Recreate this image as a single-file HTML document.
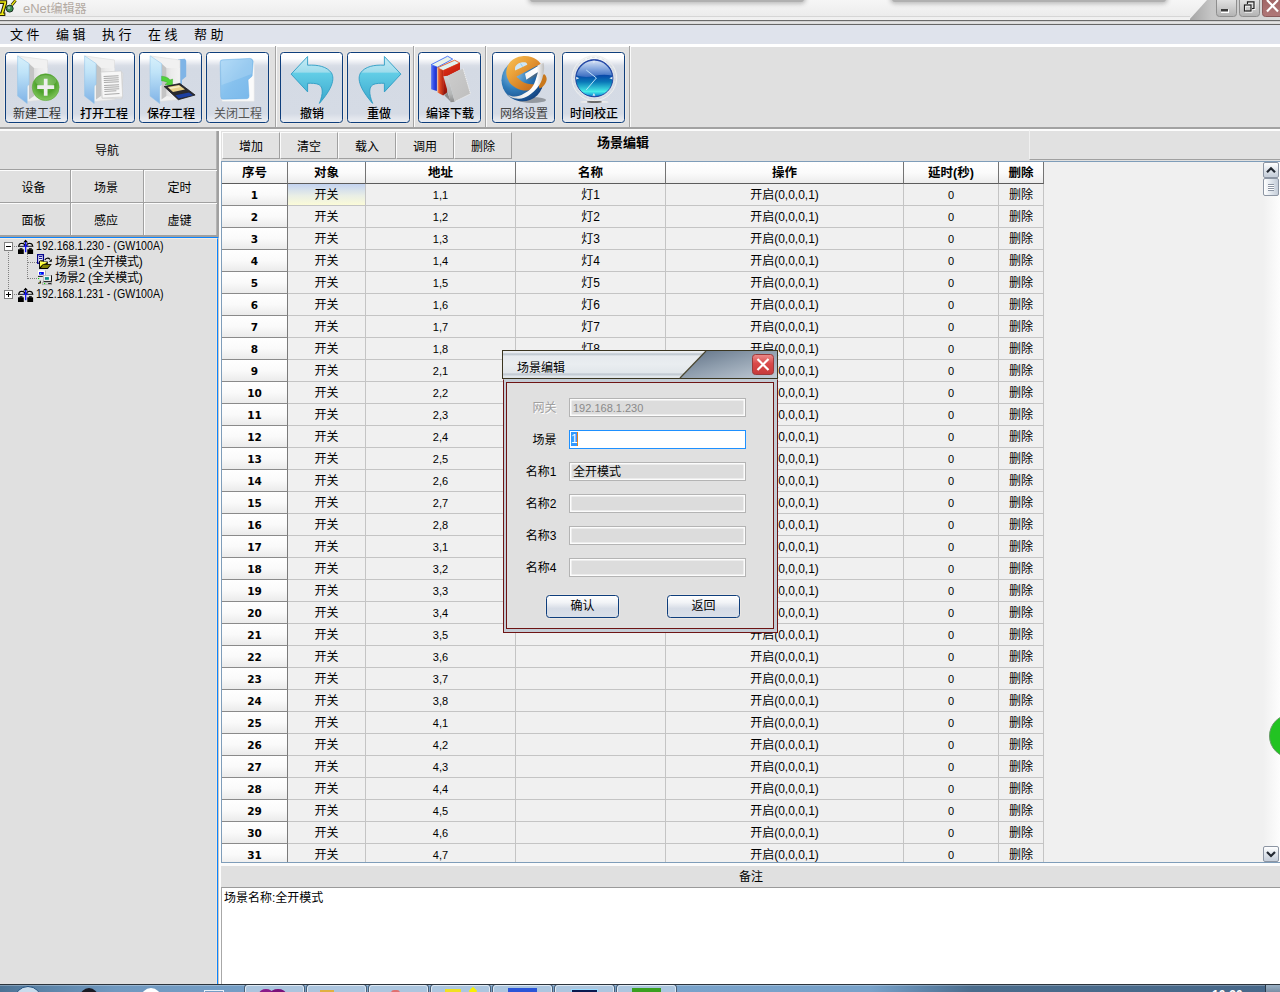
<!DOCTYPE html><html lang="zh-CN"><head><meta charset="utf-8"><title>eNet编辑器</title><style>
*{box-sizing:border-box;margin:0;padding:0}
html,body{width:1280px;height:992px;overflow:hidden;background:#e0e0e0;font-family:"Liberation Sans","Noto Sans CJK SC",sans-serif;font-size:12px;color:#000}
.abs{position:absolute}
#title{left:0;top:0;width:1280px;height:20px;overflow:hidden;background:linear-gradient(#f6f6f6,#f0f0f0 50%,#e9e9e9)}
#title .t{left:23px;top:0;height:18px;line-height:17px;font-size:13px;color:#b3aaa2;white-space:nowrap}
#menubar{left:0;top:25px;width:1280px;height:19px;background:#dfe3ec}
#menubar span{position:absolute;top:0;height:19px;line-height:19px;font-size:13px;white-space:nowrap;word-spacing:0px}
#toolbar{left:0;top:47px;width:1280px;height:80px;background:#e0e0e0}
.tb{position:absolute;top:5px;width:63px;height:71px;border:1px solid #0e3e7c;border-radius:3.5px;box-shadow:0 0 0 1px rgba(244,238,232,0.55);background:linear-gradient(#ffffff 0,#fcfdfe 8%,#eceef3 13%,#d9dee7 18%,#d4dae4 23%,#d5dbe5 88%,#e1e5ec 94%,#e9ecf2 100%)}
.tb .l{position:absolute;left:1px;right:0;bottom:0.5px;height:16px;line-height:16px;text-align:center;font-size:12px;white-space:nowrap}
.tb svg{position:absolute;left:0;top:0}
.sep{position:absolute;top:-1px;width:2px;height:81px;border-left:1px solid #a4a4a4;border-right:1px solid #fafafa}
.raised{position:absolute;background:#e2e2e2;border-top:1px solid #fafafa;border-left:1px solid #fafafa;border-right:2px solid #a8a8a8;border-bottom:2px solid #a8a8a8;text-align:center;font-size:13px;white-space:nowrap}
.lt{position:absolute;text-align:center;font-size:12px;white-space:nowrap;transform:translate(-1px,1px)}
.tab{position:absolute;top:132px;width:58px;height:27px;background:#e2e2e2;border-top:1px solid #fcfcfc;border-left:1px solid #fcfcfc;border-right:1px solid #a0a0a0;border-bottom:1px solid #a0a0a0;text-align:center;line-height:28px;font-size:12px}
#grid{left:221px;top:161px;width:1059px;height:702px;overflow:hidden;background:#f0f0f0;border-left:1px solid #7f9db9;border-top:1px solid #7f9db9;border-bottom:1px solid #7f9db9}
.hc{position:absolute;top:0;height:22px;background:linear-gradient(#ffffff,#fbfbfb 50%,#ececec);border-right:1px solid #747474;border-bottom:1px solid #5c5c5c;text-align:center;font-weight:bold;line-height:22px;font-size:12.5px}
.rh{position:absolute;left:0;width:66px;height:22px;background:linear-gradient(#ffffff,#fafafa 50%,#ebebeb);border-right:1px solid #7a7a7a;border-bottom:1px solid #8a8a8a;text-align:center;font-weight:bold;line-height:22px;font-size:10.5px;font-family:"DejaVu Sans","Liberation Sans",sans-serif}
.c{position:absolute;height:22px;border-right:1px solid #c4c4c4;border-bottom:1px solid #c4c4c4;text-align:center;line-height:23px;font-size:12px;white-space:nowrap}
.c.n{font-size:11px;line-height:22px}

#tree{position:absolute;left:0;top:238px;width:217px;height:746px;font-size:12px}
#tree .tx{position:absolute;height:16px;line-height:16px;white-space:nowrap;font-size:12px}
.dot-h{position:absolute;height:1px;background-image:linear-gradient(90deg,#808080 50%,transparent 50%);background-size:2px 1px}
.dot-v{position:absolute;width:1px;background-image:linear-gradient(#808080 50%,transparent 50%);background-size:1px 2px}
.xb{position:absolute;width:9px;height:9px;border:1px solid #808080;background:#fff}
.xb i{position:absolute;left:1px;top:3px;width:5px;height:1px;background:#000}
.xb b{position:absolute;left:3px;top:1px;width:1px;height:5px;background:#000}
#sb{position:absolute;left:1041px;top:0;width:17px;height:700px;background:linear-gradient(90deg,#f0f0f0,#f4f4f4 30%,#fdfdfd)}
.sbtn{position:absolute;left:0;width:16px;border:1px solid #8c95a3;border-radius:2px;background:linear-gradient(#ffffff,#e9edf2 35%,#c9d1dc 90%)}
#dlg{position:absolute;left:502px;top:350px;width:276px;height:283px}
#dlg .lab{position:absolute;left:18.5px;width:36px;text-align:right;height:18px;line-height:18px;font-size:12px;white-space:nowrap}
#dlg .fld{position:absolute;left:67px;width:177px;height:19px;border:1px solid #b4b4b4;background:#dcdcdc;box-shadow:inset 0 0 0 1.5px #fcfcfc;line-height:19px;font-size:12px;padding-left:3px;white-space:nowrap}
.pbtn{position:absolute;height:23px;width:73px;border:1px solid #0e3e7c;border-radius:3.5px;box-shadow:0 0 0 1px rgba(244,238,232,0.5);background:linear-gradient(#ffffff,#f2f4f7 30%,#d6dce6 60%,#d9dfe8);text-align:center;line-height:21px;font-size:12px}
</style></head><body>
<svg width="0" height="0" style="position:absolute"><defs>
<linearGradient id="gFlap" x1="0" y1="0" x2="0" y2="1"><stop offset="0" stop-color="#d9f1fb"/><stop offset="0.35" stop-color="#bfe3f8"/><stop offset="1" stop-color="#7fb2e6"/></linearGradient>
<linearGradient id="gBack" x1="0" y1="0" x2="1" y2="0"><stop offset="0" stop-color="#cfcfcf"/><stop offset="0.35" stop-color="#e6e6e6"/><stop offset="1" stop-color="#f4f4f4"/></linearGradient>
<radialGradient id="gGreen" cx="0.5" cy="0.35" r="0.7"><stop offset="0" stop-color="#6fbf4a"/><stop offset="0.5" stop-color="#4da22a"/><stop offset="1" stop-color="#8fd06a"/></radialGradient>
<linearGradient id="gBlueF" x1="0" y1="0" x2="1" y2="1"><stop offset="0" stop-color="#a6d5f5"/><stop offset="0.5" stop-color="#86c1ee"/><stop offset="1" stop-color="#78b7ea"/></linearGradient>
<linearGradient id="gArrow" x1="0" y1="0" x2="0" y2="1"><stop offset="0" stop-color="#c9ecf5"/><stop offset="0.33" stop-color="#9fdcec"/><stop offset="0.36" stop-color="#62cde6"/><stop offset="0.7" stop-color="#4db9d8"/><stop offset="1" stop-color="#3fa6c9"/></linearGradient>
<linearGradient id="gBlueBk" x1="0" y1="0" x2="1" y2="0"><stop offset="0" stop-color="#5c7cf4"/><stop offset="0.5" stop-color="#2f48e6"/><stop offset="1" stop-color="#1b2cc4"/></linearGradient><linearGradient id="gRedF" x1="0" y1="0" x2="0.3" y2="1"><stop offset="0" stop-color="#e2381c"/><stop offset="0.4" stop-color="#cc2410"/><stop offset="1" stop-color="#861008"/></linearGradient><linearGradient id="gGraySp" x1="0" y1="0" x2="0" y2="1"><stop offset="0" stop-color="#d2d6d6"/><stop offset="0.7" stop-color="#b4b6b6"/><stop offset="1" stop-color="#8a8a8a"/></linearGradient>
<linearGradient id="gRedBk" x1="0" y1="0" x2="1" y2="0"><stop offset="0" stop-color="#f0905a"/><stop offset="0.4" stop-color="#e04a26"/><stop offset="1" stop-color="#b42812"/></linearGradient>
<linearGradient id="gGrayBk" x1="0" y1="0" x2="1" y2="1"><stop offset="0" stop-color="#cdcdcd"/><stop offset="1" stop-color="#bebebe"/></linearGradient>
<radialGradient id="gGlobe" cx="0.3" cy="0.35" r="0.8"><stop offset="0" stop-color="#8cc0e4"/><stop offset="0.45" stop-color="#2f7cba"/><stop offset="1" stop-color="#0f3a78"/></radialGradient>
<linearGradient id="gOrange" x1="0" y1="0" x2="1" y2="1"><stop offset="0" stop-color="#f8c45a"/><stop offset="0.35" stop-color="#eba23a"/><stop offset="0.7" stop-color="#d27c24"/><stop offset="1" stop-color="#b8621a"/></linearGradient>
<linearGradient id="gSilver" x1="0" y1="0" x2="1" y2="0"><stop offset="0" stop-color="#c8c8c8"/><stop offset="0.45" stop-color="#f4f4f4"/><stop offset="0.8" stop-color="#ffffff"/><stop offset="1" stop-color="#bcbcbc"/></linearGradient>
<linearGradient id="gClock" x1="0" y1="0" x2="0" y2="1"><stop offset="0" stop-color="#2a50b0"/><stop offset="0.42" stop-color="#0848a8"/><stop offset="0.6" stop-color="#0a78b8"/><stop offset="0.86" stop-color="#46ece8"/><stop offset="0.95" stop-color="#1aa4dc"/><stop offset="1" stop-color="#0a4ab0"/></linearGradient><linearGradient id="gGloss" x1="0" y1="0" x2="0" y2="1"><stop offset="0" stop-color="#d4e0f4"/><stop offset="0.55" stop-color="#7ea2dc"/><stop offset="1" stop-color="#3a6cc0"/></linearGradient>
<linearGradient id="gRing" x1="0" y1="0" x2="0" y2="1"><stop offset="0" stop-color="#ffffff"/><stop offset="0.5" stop-color="#e4e8ec"/><stop offset="1" stop-color="#f8f8f8"/></linearGradient>
</defs></svg>
<div id="title" class="abs"><span class="abs t">eNet<span style="font-size:12px">编辑器</span></span>
<div class="abs" style="left:530px;top:-5px;width:274px;height:7px;background:#b0b0b0;border-radius:3px;box-shadow:0 0 4px 2px #bcbcbc"></div>
<div class="abs" style="left:892px;top:-5px;width:274px;height:7px;background:#b0b0b0;border-radius:3px;box-shadow:0 0 4px 2px #bcbcbc"></div>
<svg class="abs" style="left:0;top:0" width="18" height="18" viewBox="0 0 18 18"><path d="M-1 0.700 H6.600 V3.300 L3.700 13 H4.800 V15.600 H-1 V13 H0.900 L3.700 3.400 H-1 Z" fill="#f2ec12" stroke="#2a2600" stroke-width="1.100"/><circle cx="9.700" cy="8.600" r="3.500" fill="#3c8c50" stroke="#1c3424" stroke-width="1"/><circle cx="9" cy="7.800" r="1.400" fill="#9abcb0"/><path d="M11.800 5 L15.600 0.300" stroke="#2a2600" stroke-width="2.800"/><path d="M11.800 5 L15.600 0.300" stroke="#f2ec12" stroke-width="1.300"/></svg>
<svg class="abs" style="left:1180px;top:0" width="100" height="20" viewBox="0 0 100 20"><defs><linearGradient id="sl" x1="0" y1="0" x2="1" y2="0"><stop offset="0" stop-color="#a4a4a4"/><stop offset="0.25" stop-color="#c6c6c6"/><stop offset="1" stop-color="#dadada"/></linearGradient><linearGradient id="wb" x1="0" y1="0" x2="0" y2="1"><stop offset="0" stop-color="#e6e6e6"/><stop offset="1" stop-color="#b2b2b2"/></linearGradient><linearGradient id="wc" x1="0" y1="0" x2="0" y2="1"><stop offset="0" stop-color="#a06464"/><stop offset="1" stop-color="#b07878"/></linearGradient></defs><path d="M27 0 L100 0 L100 20 L9 20 Z" fill="url(#sl)"/><path d="M36.500 -2 H56.500 V13.500 Q56.500 16.500 53.500 16.500 H39.500 Q36.500 16.500 36.500 13.500 Z" fill="url(#wb)" stroke="#8e8e8e"/><path d="M59.500 -2 H79.500 V13.500 Q79.500 16.500 76.500 16.500 H62.500 Q59.500 16.500 59.500 13.500 Z" fill="url(#wb)" stroke="#8e8e8e"/><path d="M82.500 -2 H102 V16.500 H85.500 Q82.500 16.500 82.500 13.500 Z" fill="url(#wc)" stroke="#8a5a5a"/><rect x="41" y="9.500" width="8" height="3.500" fill="#fff"/><rect x="41" y="9" width="7" height="2.500" fill="#3c3c3c"/><path d="M67.500 3.500 V2 H74 V8.500 H72.500" fill="none" stroke="#fff" stroke-width="1.2" transform="translate(0.8,0.8)"/><rect x="64.500" y="5.200" width="6.500" height="6" fill="none" stroke="#fff" stroke-width="1.2" transform="translate(0.8,0.8)"/><path d="M67.500 4 V1.800 H74 V8.500 H72" fill="none" stroke="#1e1e1e" stroke-width="1.2"/><rect x="64.500" y="5" width="6.500" height="6" fill="none" stroke="#1e1e1e" stroke-width="1.2"/><path d="M87 0 L98 11.500 M98 0 L87 11.500" stroke="#fff" stroke-width="2.2"/></svg>
</div>
<div class="abs" style="left:0;top:16px;width:1190px;height:4px;background:linear-gradient(#d6d6d6,#d6d6d6 25%,#f0f0f0 26%,#f1f1f1)"></div>
<div class="abs" style="left:0;top:20px;width:1280px;height:1px;background:#6a6a6a"></div>
<div class="abs" style="left:0;top:21px;width:1280px;height:3px;background:linear-gradient(#c8c8c8,#e4e4e4 50%,#d8d8d8)"></div>
<div class="abs" style="left:0;top:24px;width:1280px;height:1px;background:#666"></div>
<div id="menubar" class="abs">
<span style="left:10px">文 件</span>
<span style="left:56px">编 辑</span>
<span style="left:102px">执 行</span>
<span style="left:148px">在 线</span>
<span style="left:194px">帮 助</span>
</div>
<div class="abs" style="left:0;top:44px;width:1280px;height:3px;background:#fff"></div>
<div id="toolbar" class="abs">
<div class="tb" style="left:5px"><svg style="left:-1px;top:-1px" width="64" height="72" viewBox="0 0 64 72"><g transform="translate(0,0)"><path d="M13 4 L42.5 8 L42.5 47.5 L22 49.5 Z" fill="#f1f1f1" stroke="#dcdcdc" stroke-width="0.6"/><path d="M24 11.5 L29 16 L29 44 L24 47.5 Z" fill="#c4c4c4"/><path d="M29 16 L42.5 16 L42.5 47 L29 44 Z" fill="url(#gBack)" opacity="0.55"/><path d="M12.6 3.8 L24.1 11.6 L24.1 32.5 L22.2 34.1 L22.2 51.6 L12.6 44.1 Z" fill="url(#gFlap)" stroke="#8cc0e8" stroke-width="0.5"/></g><circle cx="40.7" cy="35.2" r="13.4" fill="url(#gGreen)" stroke="#5aa63a" stroke-width="0.6"/><ellipse cx="40.7" cy="29" rx="10.5" ry="6" fill="#fff" opacity="0.18"/><path d="M32.2 35.2 H49.2 M40.7 26.7 V43.7" stroke="#eeeeee" stroke-width="3.7"/></svg><div class="l" style="color:#333;font-weight:400">新建工程</div></div>
<div class="tb" style="left:72px"><svg style="left:-1px;top:-1px" width="64" height="72" viewBox="0 0 64 72"><g transform="translate(0,0)"><path d="M13 4 L42.5 8 L42.5 47.5 L22 49.5 Z" fill="#f1f1f1" stroke="#dcdcdc" stroke-width="0.6"/><path d="M24 11.5 L29 16 L29 44 L24 47.5 Z" fill="#c4c4c4"/><path d="M29 16 L42.5 16 L42.5 47 L29 44 Z" fill="url(#gBack)" opacity="0.55"/><path d="M12.6 3.8 L24.1 11.6 L24.1 32.5 L22.2 34.1 L22.2 51.6 L12.6 44.1 Z" fill="url(#gFlap)" stroke="#8cc0e8" stroke-width="0.5"/></g><g transform="rotate(-3 40 32)"><rect x="30.5" y="20.5" width="20" height="26" fill="#e9e9e9" stroke="#cfcfcf" stroke-width="0.6" transform="rotate(5 40 32)"/><rect x="29.5" y="19.5" width="20.5" height="26" fill="#f7f7f7" stroke="#c9c9c9" stroke-width="0.6"/><path d="M32 24h15M32 26h15M32 28h15M32 30h15M32 33h15M32 35h15M32 37h15M32 39h12M32 42h15" stroke="#a9a9a9" stroke-width="1"/></g></svg><div class="l" style="color:#000;font-weight:500">打开工程</div></div>
<div class="tb" style="left:139px"><svg style="left:-1px;top:-1px" width="64" height="72" viewBox="0 0 64 72"><g transform="translate(-1.5,0.3)"><path d="M40.5 7 L47.5 6.4 L48.7 8.5 L48.7 24.2 L44.5 27.8 L44.5 46 L40.5 47 Z" fill="#7fb4e6"/></g><g transform="translate(-1.5,0)"><path d="M13 4 L42.5 8 L42.5 47.5 L22 49.5 Z" fill="#f1f1f1" stroke="#dcdcdc" stroke-width="0.6"/><path d="M24 11.5 L29 16 L29 44 L24 47.5 Z" fill="#c4c4c4"/><path d="M29 16 L42.5 16 L42.5 47 L29 44 Z" fill="url(#gBack)" opacity="0.55"/><path d="M12.6 3.8 L24.1 11.6 L24.1 32.5 L22.2 34.1 L22.2 51.6 L12.6 44.1 Z" fill="url(#gFlap)" stroke="#8cc0e8" stroke-width="0.5"/></g><path d="M22.6 24.2 C27 24.5 30 26 31 28 L33.6 27 L33.4 34 L26 32.5 L28.3 30.8 C27 29.6 25 29 22.6 29 Z" fill="#4fd23a" stroke="#2fa020" stroke-width="0.4"/><path d="M25.2 34.6 L40.9 31.5 L56.1 43 L39.3 47.7 Z" fill="#2a2a2e" stroke="#1a1a1e" stroke-width="0.8" stroke-linejoin="round"/><path d="M28.6 34.9 L40 32.9 L46 37.5 L34 40 Z" fill="#e8d08a"/><path d="M30 35.6 L40 33.9 L41.6 35.1 L31.4 36.9 Z" fill="#f6ecc8"/><path d="M36.5 43.2 L50 40.5 L54 43.3 L39.6 46.6 Z" fill="#1c3fa0"/></svg><div class="l" style="color:#000;font-weight:500">保存工程</div></div>
<div class="tb" style="left:206px"><svg style="left:-1px;top:-1px" width="64" height="72" viewBox="0 0 64 72"><path d="M16 9 L48.2 9 L48.2 49.3 L16 49.3 Z" fill="#fbfbfb" stroke="#e2e2e2" stroke-width="0.5"/><path d="M14.2 10 Q14.2 7.9 16.5 7.8 L44 6.4 Q46.6 6.4 47.2 9.5 L46.1 24.2 L42 27.8 L43 44.1 Q43 46.7 40.9 46.7 L17 47.2 Q14.9 47.2 14.7 44.5 Z" fill="url(#gBlueF)" stroke="#6aaee4" stroke-width="0.5"/><path d="M15 10 Q15 8.5 17 8.4 L44 7 Q46 7 46.4 9.6 L45.6 22 Q30 28 15.6 33 Z" fill="#ffffff" opacity="0.16"/></svg><div class="l" style="color:#555;font-weight:400">关闭工程</div></div>
<div class="tb" style="left:280px"><svg style="left:-1px;top:-1px" width="64" height="72" viewBox="0 0 64 72"><path d="M11.1 22.1 L27.6 4.5 L27.6 13.2 C38 12.6 47 14.5 51.5 21 C55 27 52 37 39.4 51.4 C43.5 41 43 35 39 32.6 C36 31.2 31 31.2 27.6 31.3 L27.6 39.9 Z" fill="url(#gArrow)" stroke="#2b9cc4" stroke-width="0.9" stroke-linejoin="round"/></svg><div class="l" style="color:#000;font-weight:500">撤销</div></div>
<div class="tb" style="left:347px"><svg style="left:-1px;top:-1px" width="64" height="72" viewBox="0 0 64 72"><g transform="translate(65,0) scale(-1,1)"><path d="M11.1 22.1 L27.6 4.5 L27.6 13.2 C38 12.6 47 14.5 51.5 21 C55 27 52 37 39.4 51.4 C43.5 41 43 35 39 32.6 C36 31.2 31 31.2 27.6 31.3 L27.6 39.9 Z" fill="url(#gArrow)" stroke="#2b9cc4" stroke-width="0.9" stroke-linejoin="round"/></g></svg><div class="l" style="color:#000;font-weight:500">重做</div></div>
<div class="tb" style="left:418px"><svg style="left:-1px;top:-1px" width="64" height="72" viewBox="0 0 64 72"><path d="M13.100 12.700 L29.600 4.200 L34.700 7.100 L19.500 15.200 Z" fill="#e9f3ea" stroke="#3f6df6" stroke-width="0.9" stroke-linejoin="round"/><path d="M13.100 13 L18.900 15 L18.900 38.900 L13.100 37.200 Z" fill="url(#gBlueBk)"/><path d="M19.500 15.800 L36.700 8.200 L41.800 11 L25.100 18.600 Z" fill="#dff2f0" stroke="#e4602c" stroke-width="0.9" stroke-linejoin="round"/><path d="M19.500 16.100 L25.100 18.600 L25.100 43.500 L19.500 40.600 Z" fill="url(#gRedBk)"/><path d="M25.100 18.600 L42 10.700 L42 17.500 L29.900 23.700 L29.300 40.600 L25.100 43.500 Z" fill="url(#gRedF)"/><path d="M26.500 43.500 L29.300 40 L33 50 Z" fill="#8c8c8c"/><path d="M25.400 24.300 L29.900 23.700 L36.700 49.700 L32.700 50.200 Z" fill="url(#gGraySp)"/><path d="M29.900 23.700 L45.100 16.400 L52.500 41.800 L36.700 49.700 Z" fill="url(#gGrayBk)"/><path d="M45.100 16.400 L52.500 41.800 L36.700 49.700" fill="none" stroke="#f6f6f6" stroke-width="0.8" stroke-dasharray="1.4 0.8"/></svg><div class="l" style="color:#000;font-weight:500">编译下载</div></div>
<div class="tb" style="left:492px"><svg style="left:-1px;top:-1px" width="64" height="72" viewBox="0 0 64 72"><ellipse cx="40" cy="48" rx="14" ry="3" fill="#000" opacity="0.3"/><circle cx="30.5" cy="28.3" r="21" fill="url(#gGlobe)"/><path d="M51.9 22 C55 24 55.500 28 53.500 31 C52 34 50 35.500 47.400 36.500 L46 30 Z" fill="#c9781c"/><path d="M29.900 4.200 C36 3.500 41 5 44 7.300 C46 8.800 47.500 10 48.500 11.600 L48.500 12.100 L24.500 24.500 C25 25.500 25.800 26 26.500 26.500 C29 29 31 30.500 33.900 31.300 C37 32.200 40 32.300 41.800 32.200 L42.900 32.700 C42 35 41 36.500 39.500 37.200 C37 38.500 34 38.700 31.600 38.400 C28 38 25 37 22.600 35 C19.500 33 17.500 31 16.400 28.200 C14.500 24.500 14 21.500 14.400 18.600 C15 14.500 16.500 12 18.600 9.600 C21.500 6.500 25.500 4.700 29.900 4.200 Z" fill="url(#gOrange)"/><path d="M23.100 18.600 C22.800 16.500 23 15.200 23.700 14.100 C24.800 12.300 26.300 11.200 28.200 10.700 C30.200 10.200 32.300 10.100 33.900 10.400 C34.800 10.900 35.200 11.800 35.300 12.700 Z" fill="#cfe6f4"/><path d="M28.600 11.500 L30.600 14.600" stroke="#5fb8e6" stroke-width="0.6"/><path d="M33 21.700 L51.400 10.700 C52.200 13 52.300 16 51.900 18.600 C51.500 22 50.800 25.500 49.700 28.200 C48.500 31.200 47 33.800 45.100 36.100 C42.800 39 40 41.500 36.700 43.500 C33.800 45.300 30.500 46.500 27.100 46.800 C24 47 21 46.300 18.600 45.100 C17.200 44.400 16 43.400 15.200 42.300 C17.500 43.800 20 44.500 22.600 44.600 C25.800 44.600 28.800 43.500 31.600 41.800 C34.700 40.200 37.400 38.500 39.500 36.100 C41.300 33.800 42.600 31 43.500 28.200 C44.400 25.600 45.200 23 45.700 20.300 L34.400 27.700 Z" fill="url(#gSilver)"/><path d="M34.400 27.700 L45.700 20.300 L45 23.500 L37.500 27.500 Z" fill="#6a6a6a" opacity="0.55"/></svg><div class="l" style="color:#444;font-weight:400">网络设置</div></div>
<div class="tb" style="left:562px"><svg style="left:-1px;top:-1px" width="64" height="72" viewBox="0 0 64 72"><ellipse cx="32.4" cy="49.9" rx="14.4" ry="1.2" fill="#ececec"/><ellipse cx="32.4" cy="49.9" rx="7.5" ry="1.1" fill="#6a6a6a"/><circle cx="32.3" cy="26.2" r="22.4" fill="#e9edf2" fill-opacity="0.35" stroke="#eeeeee" stroke-width="1"/><circle cx="32.3" cy="26.2" r="20.8" fill="none" stroke="#c9cdd2" stroke-width="0.5" stroke-dasharray="3 2"/><circle cx="32.3" cy="26.2" r="18.6" fill="url(#gClock)" stroke="#1c3a9a" stroke-width="0.9"/><path d="M14.600 23.500 A18 18 0 0 1 50 23.500 C44 22.500 38 22.600 32.300 24 C26 25.400 20 25.200 14.600 23.500 Z" fill="url(#gGloss)"/><path d="M30.400 8.800 L33.400 8.800 L31.900 11.600 Z M30.400 43.700 L33.400 43.700 L31.900 40.900 Z M14.200 24.800 L14.200 27.600 L17.200 26.200 Z M50.400 24.800 L50.400 27.600 L47.400 26.200 Z" fill="#dfe8f4"/><path d="M24.300 18.100 L34.400 26 L24.300 37.800" fill="none" stroke="#cdeeff" stroke-width="1" opacity="0.9"/></svg><div class="l" style="color:#000;font-weight:500">时间校正</div></div>
<div class="sep" style="left:275px"></div>
<div class="sep" style="left:413px"></div>
<div class="sep" style="left:485px"></div>
<div class="sep" style="left:629px"></div>
</div>
<div class="abs" style="left:0;top:127px;width:1280px;height:2px;background:#a2a2a2"></div>
<div class="abs" style="left:0;top:129px;width:1280px;height:2px;background:#fbfbfb"></div>
<div class="abs" style="left:1029px;top:129px;width:251px;height:31px;background:#e1e1e1;border-top:2px solid #fcfcfc;border-bottom:1px solid #a0a0a0;border-left:1px solid #f0f0f0"></div>
<div class="abs" style="left:0;top:131px;width:217px;height:106px;background:#e0e0e0"></div>
<div class="abs" style="left:216px;top:131px;width:3px;height:106px;background:#a0a0a0;border-left:1px solid #b4b4b4"></div>
<div class="abs" style="left:0;top:169px;width:217px;height:1px;background:#a0a0a0"></div>
<div class="abs" style="left:0;top:170px;width:217px;height:1px;background:#fcfcfc"></div>
<div class="abs" style="left:0;top:202px;width:217px;height:1px;background:#a0a0a0"></div>
<div class="abs" style="left:0;top:203px;width:217px;height:1px;background:#fcfcfc"></div>
<div class="abs" style="left:0;top:235px;width:219px;height:2px;background:#a0a0a0"></div>
<div class="abs" style="left:70px;top:170px;width:1px;height:65px;background:#a0a0a0"></div>
<div class="abs" style="left:71px;top:170px;width:1px;height:32px;background:#fcfcfc"></div>
<div class="abs" style="left:71px;top:203px;width:1px;height:32px;background:#fcfcfc"></div>
<div class="abs" style="left:143px;top:170px;width:1px;height:65px;background:#a0a0a0"></div>
<div class="abs" style="left:144px;top:170px;width:1px;height:32px;background:#fcfcfc"></div>
<div class="abs" style="left:144px;top:203px;width:1px;height:32px;background:#fcfcfc"></div>
<div class="lt" style="left:0;top:131px;width:216px;height:38px;line-height:38px">导航</div>
<div class="lt" style="left:0px;top:171px;width:69px;height:31px;line-height:32px">设备</div>
<div class="lt" style="left:72px;top:171px;width:70px;height:31px;line-height:32px">场景</div>
<div class="lt" style="left:145px;top:171px;width:71px;height:31px;line-height:32px">定时</div>
<div class="lt" style="left:0px;top:204px;width:69px;height:31px;line-height:32px">面板</div>
<div class="lt" style="left:72px;top:204px;width:70px;height:31px;line-height:32px">感应</div>
<div class="lt" style="left:145px;top:204px;width:71px;height:31px;line-height:32px">虚键</div>
<div class="abs" style="left:219px;top:131px;width:2px;height:853px;background:#fdfdfd"></div>
<div class="abs" style="left:0;top:237px;width:219px;height:747px;border-top:1px solid #0a84ff;border-right:1px solid #cfc8c0;background:#e0e0e0"><div class="abs" style="left:0;top:0;width:218px;height:746px;border-top:1px solid #f4ebe2;border-right:1px solid #0a84ff"><div class="abs" style="left:0;top:0;width:217px;height:745px;border-right:1px solid #f0e6dc"></div></div></div>
<div id="tree">
<div class="dot-v" style="left:8px;top:14px;height:38px"></div>
<div class="dot-h" style="left:14px;top:8px;width:5px"></div>
<div class="dot-h" style="left:14px;top:56px;width:5px"></div>
<div class="dot-v" style="left:27px;top:16px;height:25px"></div>
<div class="dot-h" style="left:28px;top:24px;width:9px"></div>
<div class="dot-h" style="left:28px;top:40px;width:9px"></div>
<div class="xb" style="left:4px;top:4px"><i></i></div>
<div class="xb" style="left:4px;top:52px"><i></i><b></b></div>
<svg class="abs" style="left:18px;top:0px" width="16" height="16" viewBox="0 0 16 16"><path d="M4.300 5 L7.600 0.600 L10.900 5 Z" fill="#fff"/><path d="M5 4.400 L7.600 1.400 L10.200 4.400 Z" fill="#000"/><path d="M0.600 8.300 A3.300 3.500 0 0 1 7.100 8.300 Z" fill="#fff" stroke="#000" stroke-width="1.100"/><path d="M8.300 8.300 A3.300 3.500 0 0 1 14.800 8.300 Z" fill="#fff" stroke="#000" stroke-width="1.100"/><rect x="0" y="11.300" width="5.800" height="4.700" fill="#000"/><rect x="9.300" y="11.300" width="5.800" height="4.700" fill="#000"/><rect x="1.600" y="10.200" width="2.900" height="1.400" fill="#000"/><rect x="10.900" y="10.200" width="2.900" height="1.400" fill="#000"/><rect x="7" y="4" width="1.300" height="10.200" fill="#1414ff"/><rect x="5.200" y="7.600" width="5" height="1" fill="#1414ff"/></svg>
<svg class="abs" style="left:18px;top:48px" width="16" height="16" viewBox="0 0 16 16"><path d="M4.300 5 L7.600 0.600 L10.900 5 Z" fill="#fff"/><path d="M5 4.400 L7.600 1.400 L10.200 4.400 Z" fill="#000"/><path d="M0.600 8.300 A3.300 3.500 0 0 1 7.100 8.300 Z" fill="#fff" stroke="#000" stroke-width="1.100"/><path d="M8.300 8.300 A3.300 3.500 0 0 1 14.800 8.300 Z" fill="#fff" stroke="#000" stroke-width="1.100"/><rect x="0" y="11.300" width="5.800" height="4.700" fill="#000"/><rect x="9.300" y="11.300" width="5.800" height="4.700" fill="#000"/><rect x="1.600" y="10.200" width="2.900" height="1.400" fill="#000"/><rect x="10.900" y="10.200" width="2.900" height="1.400" fill="#000"/><rect x="7" y="4" width="1.300" height="10.200" fill="#1414ff"/><rect x="5.200" y="7.600" width="5" height="1" fill="#1414ff"/></svg>
<svg class="abs" style="left:37px;top:16px" width="17" height="16" viewBox="0 0 17 16"><rect x="0.600" y="0.700" width="5.800" height="8.500" fill="#fff" stroke="#00008c" stroke-width="1.300"/><path d="M2 2.600h3.200M2 4.600h3.200" stroke="#00008c" stroke-width="1"/><path d="M7.900 6 C8.500 4 11.500 3.400 13 5.300" fill="none" stroke="#000" stroke-width="1.100"/><path d="M14.800 4.800 L14.800 7.800 L11.800 7.800 Z" fill="#000"/><path d="M2.100 7.100 L3.500 6.200 L6.100 6.200 L7.200 7.500 L10.800 7.500 L10.800 10 L14.800 10 L10.800 14.900 L2.100 14.900 Z" fill="#000"/><path d="M3 7.200 L9.700 8.200 L9.700 9 L5.500 10.500 L3 12.900 Z" fill="#ffff1e"/><path d="M3.400 8.200 h1 M5.400 8.200 h1 M7.400 8.700 h1 M3.400 10.200 h1" stroke="#fff" stroke-width="0.8"/><path d="M6.100 10.700 L13.400 10.700 L10.400 14 L3.900 14 Z" fill="#808000"/></svg>
<svg class="abs" style="left:37px;top:32px" width="17" height="16" viewBox="0 0 17 16"><rect x="1" y="0.500" width="7" height="4.900" fill="#fff"/><rect x="2.100" y="2" width="4.700" height="2.700" fill="#0000f0"/><rect x="3" y="2.900" width="1.200" height="1.100" fill="#00e0ff"/><path d="M8.500 0.500 V5.400" stroke="#a0a0a0" stroke-width="0.700"/><path d="M1 6.400 H5.800" stroke="#000" stroke-width="0.900"/><rect x="0" y="7.500" width="6.200" height="2.100" fill="#e8e8e8"/><rect x="1" y="8" width="1.200" height="1.100" fill="#10e010"/><rect x="6.600" y="5.600" width="7.600" height="5.500" fill="#f4f4f4" stroke="#a8a8a8" stroke-width="0.600"/><rect x="7.900" y="7.100" width="4" height="2.700" fill="#108c8c"/><path d="M14.500 5.300 V11.200" stroke="#000" stroke-width="0.900"/><path d="M6.600 11.600 H14.900" stroke="#000" stroke-width="0.900"/><rect x="5.200" y="12.200" width="9.600" height="2.600" fill="#d4d4d4" stroke="#9c9c9c" stroke-width="0.500"/><rect x="7" y="13" width="1.200" height="1.100" fill="#10e010"/><path d="M11.200 13.600 H14.400" stroke="#000" stroke-width="0.900"/><path d="M1 13.300 L3.500 12.900 L3.200 10.700" fill="none" stroke="#000" stroke-width="0.900"/><path d="M2 12 L3.600 13.600" stroke="#808000" stroke-width="0.900"/></svg>
<span class="tx" style="left:36px;top:0;transform:scaleX(0.885);transform-origin:0 0">192.168.1.230 - (GW100A)</span>
<span class="tx" style="left:55px;top:16px;letter-spacing:-0.25px">场景1 (全开模式)</span>
<span class="tx" style="left:55px;top:32px;letter-spacing:-0.25px">场景2 (全关模式)</span>
<span class="tx" style="left:36px;top:48px;transform:scaleX(0.885);transform-origin:0 0">192.168.1.231 - (GW100A)</span>
</div>
<div class="tab" style="left:222px">增加</div>
<div class="tab" style="left:280px">清空</div>
<div class="tab" style="left:338px">载入</div>
<div class="tab" style="left:396px">调用</div>
<div class="tab" style="left:454px">删除</div>
<div class="abs" style="left:597px;top:134px;height:18px;line-height:18px;font-size:13px;font-weight:bold;white-space:nowrap">场景编辑</div>
<div id="grid" class="abs">
<div class="hc" style="left:0px;width:66px">序号</div>
<div class="hc" style="left:66px;width:78px">对象</div>
<div class="hc" style="left:144px;width:150px">地址</div>
<div class="hc" style="left:294px;width:150px">名称</div>
<div class="hc" style="left:444px;width:238px">操作</div>
<div class="hc" style="left:682px;width:95px">延时(秒)</div>
<div class="hc" style="left:777px;width:45px">删除</div>
<div class="rh" style="top:22px">1</div>
<div class="c" style="left:66px;top:22px;width:78px;background:linear-gradient(#c3d3f0,#e9eee6 55%,#fbfbd8)">开关</div>
<div class="c n" style="left:144px;top:22px;width:150px">1,1</div>
<div class="c" style="left:294px;top:22px;width:150px">灯1</div>
<div class="c" style="left:444px;top:22px;width:238px">开启(0,0,0,1)</div>
<div class="c n" style="left:682px;top:22px;width:95px">0</div>
<div class="c" style="left:777px;top:22px;width:45px">删除</div>
<div class="rh" style="top:44px">2</div>
<div class="c" style="left:66px;top:44px;width:78px">开关</div>
<div class="c n" style="left:144px;top:44px;width:150px">1,2</div>
<div class="c" style="left:294px;top:44px;width:150px">灯2</div>
<div class="c" style="left:444px;top:44px;width:238px">开启(0,0,0,1)</div>
<div class="c n" style="left:682px;top:44px;width:95px">0</div>
<div class="c" style="left:777px;top:44px;width:45px">删除</div>
<div class="rh" style="top:66px">3</div>
<div class="c" style="left:66px;top:66px;width:78px">开关</div>
<div class="c n" style="left:144px;top:66px;width:150px">1,3</div>
<div class="c" style="left:294px;top:66px;width:150px">灯3</div>
<div class="c" style="left:444px;top:66px;width:238px">开启(0,0,0,1)</div>
<div class="c n" style="left:682px;top:66px;width:95px">0</div>
<div class="c" style="left:777px;top:66px;width:45px">删除</div>
<div class="rh" style="top:88px">4</div>
<div class="c" style="left:66px;top:88px;width:78px">开关</div>
<div class="c n" style="left:144px;top:88px;width:150px">1,4</div>
<div class="c" style="left:294px;top:88px;width:150px">灯4</div>
<div class="c" style="left:444px;top:88px;width:238px">开启(0,0,0,1)</div>
<div class="c n" style="left:682px;top:88px;width:95px">0</div>
<div class="c" style="left:777px;top:88px;width:45px">删除</div>
<div class="rh" style="top:110px">5</div>
<div class="c" style="left:66px;top:110px;width:78px">开关</div>
<div class="c n" style="left:144px;top:110px;width:150px">1,5</div>
<div class="c" style="left:294px;top:110px;width:150px">灯5</div>
<div class="c" style="left:444px;top:110px;width:238px">开启(0,0,0,1)</div>
<div class="c n" style="left:682px;top:110px;width:95px">0</div>
<div class="c" style="left:777px;top:110px;width:45px">删除</div>
<div class="rh" style="top:132px">6</div>
<div class="c" style="left:66px;top:132px;width:78px">开关</div>
<div class="c n" style="left:144px;top:132px;width:150px">1,6</div>
<div class="c" style="left:294px;top:132px;width:150px">灯6</div>
<div class="c" style="left:444px;top:132px;width:238px">开启(0,0,0,1)</div>
<div class="c n" style="left:682px;top:132px;width:95px">0</div>
<div class="c" style="left:777px;top:132px;width:45px">删除</div>
<div class="rh" style="top:154px">7</div>
<div class="c" style="left:66px;top:154px;width:78px">开关</div>
<div class="c n" style="left:144px;top:154px;width:150px">1,7</div>
<div class="c" style="left:294px;top:154px;width:150px">灯7</div>
<div class="c" style="left:444px;top:154px;width:238px">开启(0,0,0,1)</div>
<div class="c n" style="left:682px;top:154px;width:95px">0</div>
<div class="c" style="left:777px;top:154px;width:45px">删除</div>
<div class="rh" style="top:176px">8</div>
<div class="c" style="left:66px;top:176px;width:78px">开关</div>
<div class="c n" style="left:144px;top:176px;width:150px">1,8</div>
<div class="c" style="left:294px;top:176px;width:150px">灯8</div>
<div class="c" style="left:444px;top:176px;width:238px">开启(0,0,0,1)</div>
<div class="c n" style="left:682px;top:176px;width:95px">0</div>
<div class="c" style="left:777px;top:176px;width:45px">删除</div>
<div class="rh" style="top:198px">9</div>
<div class="c" style="left:66px;top:198px;width:78px">开关</div>
<div class="c n" style="left:144px;top:198px;width:150px">2,1</div>
<div class="c" style="left:294px;top:198px;width:150px"></div>
<div class="c" style="left:444px;top:198px;width:238px">开启(0,0,0,1)</div>
<div class="c n" style="left:682px;top:198px;width:95px">0</div>
<div class="c" style="left:777px;top:198px;width:45px">删除</div>
<div class="rh" style="top:220px">10</div>
<div class="c" style="left:66px;top:220px;width:78px">开关</div>
<div class="c n" style="left:144px;top:220px;width:150px">2,2</div>
<div class="c" style="left:294px;top:220px;width:150px"></div>
<div class="c" style="left:444px;top:220px;width:238px">开启(0,0,0,1)</div>
<div class="c n" style="left:682px;top:220px;width:95px">0</div>
<div class="c" style="left:777px;top:220px;width:45px">删除</div>
<div class="rh" style="top:242px">11</div>
<div class="c" style="left:66px;top:242px;width:78px">开关</div>
<div class="c n" style="left:144px;top:242px;width:150px">2,3</div>
<div class="c" style="left:294px;top:242px;width:150px"></div>
<div class="c" style="left:444px;top:242px;width:238px">开启(0,0,0,1)</div>
<div class="c n" style="left:682px;top:242px;width:95px">0</div>
<div class="c" style="left:777px;top:242px;width:45px">删除</div>
<div class="rh" style="top:264px">12</div>
<div class="c" style="left:66px;top:264px;width:78px">开关</div>
<div class="c n" style="left:144px;top:264px;width:150px">2,4</div>
<div class="c" style="left:294px;top:264px;width:150px"></div>
<div class="c" style="left:444px;top:264px;width:238px">开启(0,0,0,1)</div>
<div class="c n" style="left:682px;top:264px;width:95px">0</div>
<div class="c" style="left:777px;top:264px;width:45px">删除</div>
<div class="rh" style="top:286px">13</div>
<div class="c" style="left:66px;top:286px;width:78px">开关</div>
<div class="c n" style="left:144px;top:286px;width:150px">2,5</div>
<div class="c" style="left:294px;top:286px;width:150px"></div>
<div class="c" style="left:444px;top:286px;width:238px">开启(0,0,0,1)</div>
<div class="c n" style="left:682px;top:286px;width:95px">0</div>
<div class="c" style="left:777px;top:286px;width:45px">删除</div>
<div class="rh" style="top:308px">14</div>
<div class="c" style="left:66px;top:308px;width:78px">开关</div>
<div class="c n" style="left:144px;top:308px;width:150px">2,6</div>
<div class="c" style="left:294px;top:308px;width:150px"></div>
<div class="c" style="left:444px;top:308px;width:238px">开启(0,0,0,1)</div>
<div class="c n" style="left:682px;top:308px;width:95px">0</div>
<div class="c" style="left:777px;top:308px;width:45px">删除</div>
<div class="rh" style="top:330px">15</div>
<div class="c" style="left:66px;top:330px;width:78px">开关</div>
<div class="c n" style="left:144px;top:330px;width:150px">2,7</div>
<div class="c" style="left:294px;top:330px;width:150px"></div>
<div class="c" style="left:444px;top:330px;width:238px">开启(0,0,0,1)</div>
<div class="c n" style="left:682px;top:330px;width:95px">0</div>
<div class="c" style="left:777px;top:330px;width:45px">删除</div>
<div class="rh" style="top:352px">16</div>
<div class="c" style="left:66px;top:352px;width:78px">开关</div>
<div class="c n" style="left:144px;top:352px;width:150px">2,8</div>
<div class="c" style="left:294px;top:352px;width:150px"></div>
<div class="c" style="left:444px;top:352px;width:238px">开启(0,0,0,1)</div>
<div class="c n" style="left:682px;top:352px;width:95px">0</div>
<div class="c" style="left:777px;top:352px;width:45px">删除</div>
<div class="rh" style="top:374px">17</div>
<div class="c" style="left:66px;top:374px;width:78px">开关</div>
<div class="c n" style="left:144px;top:374px;width:150px">3,1</div>
<div class="c" style="left:294px;top:374px;width:150px"></div>
<div class="c" style="left:444px;top:374px;width:238px">开启(0,0,0,1)</div>
<div class="c n" style="left:682px;top:374px;width:95px">0</div>
<div class="c" style="left:777px;top:374px;width:45px">删除</div>
<div class="rh" style="top:396px">18</div>
<div class="c" style="left:66px;top:396px;width:78px">开关</div>
<div class="c n" style="left:144px;top:396px;width:150px">3,2</div>
<div class="c" style="left:294px;top:396px;width:150px"></div>
<div class="c" style="left:444px;top:396px;width:238px">开启(0,0,0,1)</div>
<div class="c n" style="left:682px;top:396px;width:95px">0</div>
<div class="c" style="left:777px;top:396px;width:45px">删除</div>
<div class="rh" style="top:418px">19</div>
<div class="c" style="left:66px;top:418px;width:78px">开关</div>
<div class="c n" style="left:144px;top:418px;width:150px">3,3</div>
<div class="c" style="left:294px;top:418px;width:150px"></div>
<div class="c" style="left:444px;top:418px;width:238px">开启(0,0,0,1)</div>
<div class="c n" style="left:682px;top:418px;width:95px">0</div>
<div class="c" style="left:777px;top:418px;width:45px">删除</div>
<div class="rh" style="top:440px">20</div>
<div class="c" style="left:66px;top:440px;width:78px">开关</div>
<div class="c n" style="left:144px;top:440px;width:150px">3,4</div>
<div class="c" style="left:294px;top:440px;width:150px"></div>
<div class="c" style="left:444px;top:440px;width:238px">开启(0,0,0,1)</div>
<div class="c n" style="left:682px;top:440px;width:95px">0</div>
<div class="c" style="left:777px;top:440px;width:45px">删除</div>
<div class="rh" style="top:462px">21</div>
<div class="c" style="left:66px;top:462px;width:78px">开关</div>
<div class="c n" style="left:144px;top:462px;width:150px">3,5</div>
<div class="c" style="left:294px;top:462px;width:150px"></div>
<div class="c" style="left:444px;top:462px;width:238px">开启(0,0,0,1)</div>
<div class="c n" style="left:682px;top:462px;width:95px">0</div>
<div class="c" style="left:777px;top:462px;width:45px">删除</div>
<div class="rh" style="top:484px">22</div>
<div class="c" style="left:66px;top:484px;width:78px">开关</div>
<div class="c n" style="left:144px;top:484px;width:150px">3,6</div>
<div class="c" style="left:294px;top:484px;width:150px"></div>
<div class="c" style="left:444px;top:484px;width:238px">开启(0,0,0,1)</div>
<div class="c n" style="left:682px;top:484px;width:95px">0</div>
<div class="c" style="left:777px;top:484px;width:45px">删除</div>
<div class="rh" style="top:506px">23</div>
<div class="c" style="left:66px;top:506px;width:78px">开关</div>
<div class="c n" style="left:144px;top:506px;width:150px">3,7</div>
<div class="c" style="left:294px;top:506px;width:150px"></div>
<div class="c" style="left:444px;top:506px;width:238px">开启(0,0,0,1)</div>
<div class="c n" style="left:682px;top:506px;width:95px">0</div>
<div class="c" style="left:777px;top:506px;width:45px">删除</div>
<div class="rh" style="top:528px">24</div>
<div class="c" style="left:66px;top:528px;width:78px">开关</div>
<div class="c n" style="left:144px;top:528px;width:150px">3,8</div>
<div class="c" style="left:294px;top:528px;width:150px"></div>
<div class="c" style="left:444px;top:528px;width:238px">开启(0,0,0,1)</div>
<div class="c n" style="left:682px;top:528px;width:95px">0</div>
<div class="c" style="left:777px;top:528px;width:45px">删除</div>
<div class="rh" style="top:550px">25</div>
<div class="c" style="left:66px;top:550px;width:78px">开关</div>
<div class="c n" style="left:144px;top:550px;width:150px">4,1</div>
<div class="c" style="left:294px;top:550px;width:150px"></div>
<div class="c" style="left:444px;top:550px;width:238px">开启(0,0,0,1)</div>
<div class="c n" style="left:682px;top:550px;width:95px">0</div>
<div class="c" style="left:777px;top:550px;width:45px">删除</div>
<div class="rh" style="top:572px">26</div>
<div class="c" style="left:66px;top:572px;width:78px">开关</div>
<div class="c n" style="left:144px;top:572px;width:150px">4,2</div>
<div class="c" style="left:294px;top:572px;width:150px"></div>
<div class="c" style="left:444px;top:572px;width:238px">开启(0,0,0,1)</div>
<div class="c n" style="left:682px;top:572px;width:95px">0</div>
<div class="c" style="left:777px;top:572px;width:45px">删除</div>
<div class="rh" style="top:594px">27</div>
<div class="c" style="left:66px;top:594px;width:78px">开关</div>
<div class="c n" style="left:144px;top:594px;width:150px">4,3</div>
<div class="c" style="left:294px;top:594px;width:150px"></div>
<div class="c" style="left:444px;top:594px;width:238px">开启(0,0,0,1)</div>
<div class="c n" style="left:682px;top:594px;width:95px">0</div>
<div class="c" style="left:777px;top:594px;width:45px">删除</div>
<div class="rh" style="top:616px">28</div>
<div class="c" style="left:66px;top:616px;width:78px">开关</div>
<div class="c n" style="left:144px;top:616px;width:150px">4,4</div>
<div class="c" style="left:294px;top:616px;width:150px"></div>
<div class="c" style="left:444px;top:616px;width:238px">开启(0,0,0,1)</div>
<div class="c n" style="left:682px;top:616px;width:95px">0</div>
<div class="c" style="left:777px;top:616px;width:45px">删除</div>
<div class="rh" style="top:638px">29</div>
<div class="c" style="left:66px;top:638px;width:78px">开关</div>
<div class="c n" style="left:144px;top:638px;width:150px">4,5</div>
<div class="c" style="left:294px;top:638px;width:150px"></div>
<div class="c" style="left:444px;top:638px;width:238px">开启(0,0,0,1)</div>
<div class="c n" style="left:682px;top:638px;width:95px">0</div>
<div class="c" style="left:777px;top:638px;width:45px">删除</div>
<div class="rh" style="top:660px">30</div>
<div class="c" style="left:66px;top:660px;width:78px">开关</div>
<div class="c n" style="left:144px;top:660px;width:150px">4,6</div>
<div class="c" style="left:294px;top:660px;width:150px"></div>
<div class="c" style="left:444px;top:660px;width:238px">开启(0,0,0,1)</div>
<div class="c n" style="left:682px;top:660px;width:95px">0</div>
<div class="c" style="left:777px;top:660px;width:45px">删除</div>
<div class="rh" style="top:682px">31</div>
<div class="c" style="left:66px;top:682px;width:78px">开关</div>
<div class="c n" style="left:144px;top:682px;width:150px">4,7</div>
<div class="c" style="left:294px;top:682px;width:150px"></div>
<div class="c" style="left:444px;top:682px;width:238px">开启(0,0,0,1)</div>
<div class="c n" style="left:682px;top:682px;width:95px">0</div>
<div class="c" style="left:777px;top:682px;width:45px">删除</div>
<div id="sb"><div class="sbtn" style="top:0;height:16px"><svg class="abs" style="left:0;top:0" width="14" height="14" viewBox="0 0 14 14"><path d="M3 9.300 L7 5.300 L11 9.300" fill="none" stroke="#222831" stroke-width="2.2"/></svg></div><div class="sbtn" style="top:16px;height:18px;background:linear-gradient(90deg,#ffffff,#e4e9ef 45%,#c3ccd8)"><svg class="abs" style="left:0;top:0" width="14" height="16" viewBox="0 0 14 16"><path d="M4 5.5h6M4 7.5h6M4 9.5h6M4 11.5h6" stroke="#8b94a3" stroke-width="1"/><path d="M4 6.5h6M4 8.5h6M4 10.5h6" stroke="#fff" stroke-width="1"/></svg></div><div class="sbtn" style="top:684px;height:16px"><svg class="abs" style="left:0;top:0" width="14" height="14" viewBox="0 0 14 14"><path d="M3 5 L7 9 L11 5" fill="none" stroke="#222831" stroke-width="2.2"/></svg></div></div>
</div>
<div class="abs" style="left:221px;top:863px;width:1059px;height:3px;background:#fbfbfb"></div>
<div class="abs" style="left:222px;top:866px;width:1058px;height:21px;background:#e0e0e0;text-align:center;line-height:22px;font-size:12px">备注</div>
<div class="abs" style="left:221px;top:887px;width:1059px;height:97px;background:#fff;border-top:1px solid #9a9a9a;border-left:1px solid #a8a8a8;line-height:20px;font-size:12px;padding-left:2px;white-space:nowrap">场景名称:全开模式</div>
<div class="abs" style="left:1269px;top:714px;width:44px;height:44px;border-radius:50%;background:#22c322;border:1px solid #6a9a6a"></div>
<div class="abs" style="left:0;top:984px;width:1280px;height:8px;background:linear-gradient(90deg,#4c7294,#5a82a6 3%,#7099c0 9%,#79a3cb 30%,#78a2ca 68%,#5f86ab 72%,#4a6c8c 76%,#47688a 100%);border-top:1px solid #2c343c;overflow:hidden"><div class="abs" style="left:0;top:0;width:1280px;height:1px;background:rgba(255,255,255,0.28)"></div><span class="abs" style="left:1212px;top:4px;color:#fff;font-size:12px;font-weight:bold;line-height:12px">10:30</span>
<div class="abs" style="left:245px;top:0;width:59px;height:10px;border:1px solid #dfe9f3;border-radius:3px;background:rgba(190,210,230,0.75);box-shadow:0 0 0 1px #4a5e74"></div>
<div class="abs" style="left:307px;top:0;width:59px;height:10px;border:1px solid #dfe9f3;border-radius:3px;background:rgba(190,210,230,0.75);box-shadow:0 0 0 1px #4a5e74"></div>
<div class="abs" style="left:369px;top:0;width:59px;height:10px;border:1px solid #dfe9f3;border-radius:3px;background:rgba(190,210,230,0.75);box-shadow:0 0 0 1px #4a5e74"></div>
<div class="abs" style="left:431px;top:0;width:59px;height:10px;border:1px solid #dfe9f3;border-radius:3px;background:rgba(190,210,230,0.75);box-shadow:0 0 0 1px #4a5e74"></div>
<div class="abs" style="left:493px;top:0;width:59px;height:10px;border:1px solid #dfe9f3;border-radius:3px;background:rgba(190,210,230,0.75);box-shadow:0 0 0 1px #4a5e74"></div>
<div class="abs" style="left:555px;top:0;width:59px;height:10px;border:1px solid #dfe9f3;border-radius:3px;background:rgba(190,210,230,0.75);box-shadow:0 0 0 1px #4a5e74"></div>
<div class="abs" style="left:617px;top:0;width:59px;height:10px;border:1px solid #dfe9f3;border-radius:3px;background:rgba(190,210,230,0.75);box-shadow:0 0 0 1px #4a5e74"></div>
<div class="abs" style="left:14px;top:1px;width:28px;height:28px;border-radius:50%;background:#c9dcec;border:1px solid #1f4f7f"></div>
<div class="abs" style="left:80px;top:3px;width:18px;height:18px;border-radius:50%;background:#1a1a24"></div>
<div class="abs" style="left:141px;top:3px;width:20px;height:20px;border-radius:50%;background:#fff"></div>
<div class="abs" style="left:204px;top:5px;width:20px;height:10px;border:1px solid #e8f0f8"></div>
<div class="abs" style="left:259px;top:4px;width:14px;height:10px;border-radius:50%;background:#8a1a8a"></div><div class="abs" style="left:270px;top:4px;width:16px;height:10px;border-radius:50%;background:#7a107a"></div>
<div class="abs" style="left:320px;top:5px;width:14px;height:6px;background:#e0b040"></div>
<div class="abs" style="left:391px;top:5px;width:9px;height:6px;border-radius:4px;background:#e07070"></div>
<div class="abs" style="left:445px;top:4px;width:16px;height:6px;background:#f0e020"></div><div class="abs" style="left:470px;top:3px;width:6px;height:6px;background:#f8f000;transform:rotate(45deg)"></div>
<div class="abs" style="left:508px;top:3px;width:29px;height:8px;background:#2a55d8"></div>
<div class="abs" style="left:571px;top:4px;width:27px;height:8px;background:#0a1a50;border:1px solid #9adcff"></div>
<div class="abs" style="left:632px;top:3px;width:29px;height:8px;background:#3aa020"></div>
<div class="abs" style="left:1265px;top:0;width:15px;height:10px;background:linear-gradient(#9ab0c4,#6a8098);border-left:1px solid #2a3a4a"></div>
</div>
<div id="dlg">
<svg class="abs" style="left:0;top:0" width="276" height="30" viewBox="0 0 276 30"><defs><linearGradient id="tl" x1="0" y1="0" x2="0" y2="1"><stop offset="0" stop-color="#eef1f4"/><stop offset="0.09" stop-color="#e6eaee"/><stop offset="0.115" stop-color="#bec7d0"/><stop offset="0.16" stop-color="#c4ccd4"/><stop offset="0.19" stop-color="#e6eaee"/><stop offset="0.5" stop-color="#e9edf0"/><stop offset="0.80" stop-color="#e1e6ea"/><stop offset="0.835" stop-color="#c1c9d2"/><stop offset="0.88" stop-color="#c6ced6"/><stop offset="0.91" stop-color="#e2e7eb"/><stop offset="1" stop-color="#dde3e8"/></linearGradient><linearGradient id="tr" x1="0" y1="0" x2="1" y2="1"><stop offset="0" stop-color="#5f7084"/><stop offset="0.45" stop-color="#8d9cac"/><stop offset="1" stop-color="#c2ccd6"/></linearGradient><linearGradient id="cx" x1="0" y1="0" x2="0" y2="1"><stop offset="0" stop-color="#ec8d8d"/><stop offset="0.45" stop-color="#d94a4a"/><stop offset="1" stop-color="#c63a3a"/></linearGradient></defs><rect x="0.5" y="0.5" width="275" height="28" fill="url(#tl)" stroke="#3a3520"/><path d="M204 1 L275 1 L275 28 L178 28 Z" fill="url(#tr)"/><path d="M204 1 L178 28" stroke="#4a4630" stroke-width="1.2"/><rect x="250.5" y="4.500" width="21" height="20" rx="3" fill="url(#cx)" stroke="#9a3a3a"/><path d="M255.5 9 L266.5 20 M266.5 9 L255.5 20" stroke="#fff" stroke-width="2.2"/></svg>
<span class="abs" style="left:15px;top:8.5px;height:19px;line-height:19px;font-size:12px;white-space:nowrap">场景编辑</span>
<div class="abs" style="left:1px;top:29px;width:275px;height:254px;border:1px solid #6e1414;border-top-color:#c4ccd5;background:#c4ccd5"><div class="abs" style="left:2px;top:2px;width:268px;height:247px;border:1px solid #6e1414;background:#e0e0e0"></div></div>
<span class="lab" style="top:49px;color:#a0a0a0;text-shadow:1px 1px 0 #fff">网关</span>
<div class="fld" style="top:48px;color:#8a8a8a;font-size:11px">192.168.1.230</div>
<span class="lab" style="top:81px;">场景</span>
<div class="fld" style="top:80px;border:1.5px solid #1e90ff;background:#fff;box-shadow:none;padding-left:1px"><span style="display:inline-block;background:#3399ff;color:#fff;height:14px;line-height:14px;width:7px;margin-top:1px;border-right:1px solid #e08020;vertical-align:top">1</span></div>
<span class="lab" style="top:113px;">名称1</span>
<div class="fld" style="top:112px;">全开模式</div>
<span class="lab" style="top:145px;">名称2</span>
<div class="fld" style="top:144px;"></div>
<span class="lab" style="top:177px;">名称3</span>
<div class="fld" style="top:176px;"></div>
<span class="lab" style="top:209px;">名称4</span>
<div class="fld" style="top:208px;"></div>
<div class="pbtn" style="left:44px;top:245px">确认</div>
<div class="pbtn" style="left:165px;top:245px">返回</div>
</div>
</body></html>
